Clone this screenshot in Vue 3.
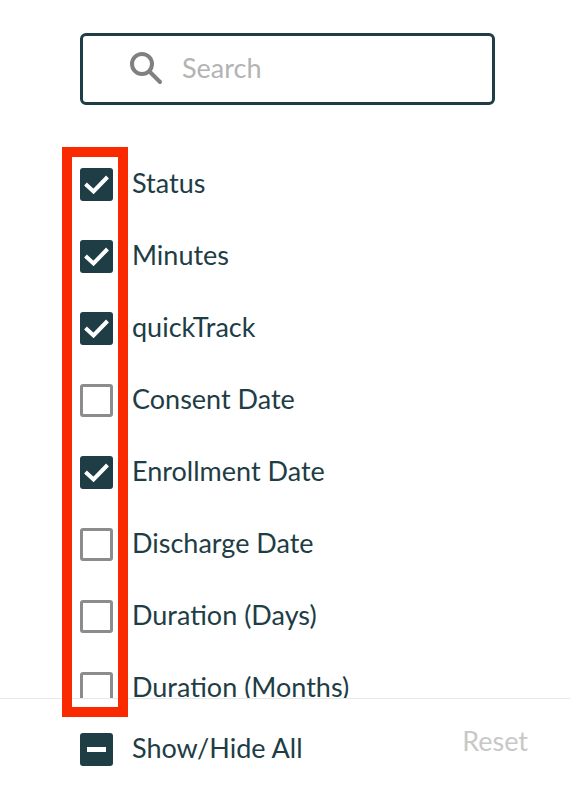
<template>
  <div class="panel">
    <div class="search-wrap">
      <div class="search">
        <svg class="search-icon" viewBox="0 0 34 34" fill="none" xmlns="http://www.w3.org/2000/svg">
          <circle cx="13" cy="13" r="10" stroke="#808080" stroke-width="4" />
          <path d="M20.5 20.5L31 31" stroke="#808080" stroke-width="4" stroke-linecap="round" />
        </svg>
        <span class="placeholder">Search</span>
      </div>
    </div>

    <div class="list">
      <div v-for="col in columns" :key="col.label" class="row">
        <span class="box" :class="{ checked: col.checked }">
          <svg v-if="col.checked" class="tick" viewBox="0 0 33 33" fill="none" xmlns="http://www.w3.org/2000/svg">
            <path d="M5.5 16L13.5 23.5L27.5 9" stroke="#fff" stroke-width="4" />
          </svg>
        </span>
        <span class="label">{{ col.label }}</span>
      </div>
    </div>

    <div class="footer">
      <div class="show-all">
        <span class="box checked">
          <span class="dash"></span>
        </span>
        <span class="label">Show/Hide All</span>
      </div>
      <span class="reset">Reset</span>
    </div>

    <div class="highlight"></div>
  </div>
</template>

<script setup>
const columns = [
  { label: 'Status', checked: true },
  { label: 'Minutes', checked: true },
  { label: 'quickTrack', checked: true },
  { label: 'Consent Date', checked: false },
  { label: 'Enrollment Date', checked: true },
  { label: 'Discharge Date', checked: false },
  { label: 'Duration (Days)', checked: false },
  { label: 'Duration (Months)', checked: false }
]
</script>

<style>
html,
body {
  margin: 0;
  background: #fff;
}
</style>

<style scoped>
.panel {
  position: relative;
  width: 570px;
  height: 794px;
  overflow: hidden;
  background: #fff;
  font-family: Lato, "Open Sans", sans-serif;
  color: #1e3d45;
}

.search-wrap {
  padding: 33px 75px 43px 80px;
}

.search {
  box-sizing: border-box;
  height: 72px;
  border: 3px solid #1e3d45;
  border-radius: 6px;
  display: flex;
  align-items: center;
  padding-left: 46px;
  padding-bottom: 3px;
}

.search-icon {
  width: 34px;
  height: 34px;
  margin-right: 19px;
}

.placeholder {
  font-size: 27px;
  line-height: 34px;
  color: #b3b3b3;
}

.list {
  height: 550px;
  overflow: hidden;
}

.row {
  height: 72px;
  padding-left: 80px;
  display: flex;
  align-items: center;
}

.box {
  box-sizing: border-box;
  flex: none;
  width: 33px;
  height: 33px;
  border: 3px solid #8c8c8c;
  border-radius: 3px;
  margin-right: 19px;
  display: flex;
  align-items: center;
  justify-content: center;
}

.box.checked {
  border: none;
  background: #1e3d45;
}

.tick {
  width: 33px;
  height: 33px;
}

.dash {
  width: 19px;
  height: 5px;
  background: #fff;
}

.label {
  font-size: 27px;
  line-height: 34px;
  margin-top: -2px;
}

.footer {
  box-sizing: border-box;
  height: 96px;
  border-top: 1px solid #e8e8e8;
  padding: 0 42px 0 80px;
  display: flex;
  justify-content: space-between;
}

.show-all {
  display: flex;
  align-items: center;
  height: 100px;
}

.reset {
  font-size: 27px;
  line-height: 34px;
  margin-top: 25px;
  color: #c8c8c8;
}

.highlight {
  position: absolute;
  left: 62px;
  top: 147px;
  box-sizing: border-box;
  width: 66px;
  height: 570px;
  border: 10px solid #fa2a00;
  pointer-events: none;
}
</style>
